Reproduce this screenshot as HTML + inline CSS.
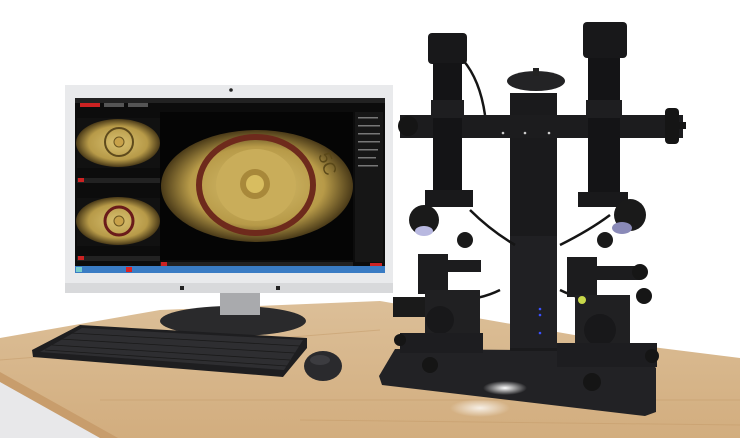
<!DOCTYPE html>
<html><head><style>html,body{margin:0;padding:0;background:#fff;width:740px;height:438px;overflow:hidden}</style></head>
<body>
<svg width="740" height="438" viewBox="0 0 740 438" xmlns="http://www.w3.org/2000/svg">
<defs>
<linearGradient id="wood" x1="0" y1="0" x2="0" y2="1"><stop offset="0" stop-color="#dcbf98"/><stop offset="1" stop-color="#d2ad7e"/></linearGradient>
<radialGradient id="brass" cx="0.5" cy="0.5" r="0.5"><stop offset="0" stop-color="#d8c070"/><stop offset="0.7" stop-color="#b79a48"/><stop offset="1" stop-color="#4a3a18"/></radialGradient>
<radialGradient id="glow" cx="0.5" cy="0.5" r="0.5"><stop offset="0" stop-color="#fff"/><stop offset="1" stop-color="#fff" stop-opacity="0"/></radialGradient>
</defs>
<rect width="740" height="438" fill="#fff"/>
<polygon points="0,338 160,310 380,301 620,343 740,358 740,438 100,438 0,380" fill="url(#wood)"/>
<polygon points="0,380 100,438 0,438" fill="#e8e8ea"/>
<polygon points="0,372 0,382 100,438 118,438" fill="#c89d6c"/>
<g stroke="#c49a68" stroke-width="1" opacity="0.5"><line x1="0" y1="360" x2="380" y2="330"/><line x1="100" y1="400" x2="740" y2="400"/><line x1="300" y1="420" x2="740" y2="425"/></g>
<ellipse cx="233" cy="321" rx="73" ry="15" fill="#2a2a2c"/>
<rect x="220" y="290" width="40" height="25" fill="#a9aaad"/>
<rect x="65" y="85" width="328" height="208" fill="#e9eaec"/>
<rect x="65" y="283" width="328" height="10" fill="#d8d9db"/>
<circle cx="231" cy="90" r="1.8" fill="#222"/>
<rect x="180" y="286" width="4" height="4" fill="#222"/><rect x="276" y="286" width="4" height="4" fill="#222"/>
<rect x="75" y="98" width="310" height="175" fill="#0c0c0c"/>
<rect x="75" y="98" width="310" height="5" fill="#222"/>
<rect x="80" y="103" width="20" height="4" fill="#c22"/><rect x="104" y="103" width="20" height="4" fill="#555"/><rect x="128" y="103" width="20" height="4" fill="#555"/>
<rect x="77" y="118" width="83" height="50" fill="#111"/>
<ellipse cx="118" cy="143" rx="42" ry="24" fill="url(#brass)"/>
<circle cx="119" cy="142" r="14" fill="none" stroke="#5e4a1c" stroke-width="2"/>
<circle cx="119" cy="142" r="5" fill="#c8a24a" stroke="#6a5520"/>
<rect x="77" y="178" width="83" height="5" fill="#222"/>
<rect x="77" y="198" width="83" height="48" fill="#111"/>
<ellipse cx="118" cy="221" rx="42" ry="24" fill="url(#brass)"/>
<circle cx="119" cy="221" r="14" fill="none" stroke="#6a1a1a" stroke-width="3"/>
<circle cx="119" cy="221" r="5" fill="#c8a24a" stroke="#6a5520"/>
<rect x="77" y="256" width="83" height="5" fill="#222"/>
<rect x="78" y="178" width="6" height="4" fill="#c22"/><rect x="78" y="256" width="6" height="4" fill="#c22"/>
<rect x="160" y="112" width="193" height="148" fill="#050505"/>
<ellipse cx="257" cy="186" rx="96" ry="56" fill="url(#brass)"/>
<ellipse cx="256" cy="185" rx="57" ry="48" fill="none" stroke="#6e2a1c" stroke-width="6"/>
<ellipse cx="256" cy="185" rx="40" ry="36" fill="#c9ad5a"/>
<circle cx="255" cy="184" r="15" fill="#a8883a"/><circle cx="255" cy="184" r="9" fill="#d8bd60"/>
<text x="318" y="155" font-family="Liberation Sans" font-size="18" fill="#5a4818" transform="rotate(70 318 155)">5C</text>
<rect x="160" y="262" width="193" height="4" fill="#222"/><rect x="161" y="262" width="6" height="4" fill="#c22"/>
<rect x="355" y="112" width="28" height="150" fill="#161616"/>
<g fill="#777"><rect x="358" y="117" width="20" height="1.5"/><rect x="358" y="125" width="22" height="1.5"/><rect x="358" y="133" width="22" height="1.5"/><rect x="358" y="141" width="22" height="1.5"/><rect x="358" y="149" width="20" height="1.5"/><rect x="358" y="157" width="18" height="1.5"/><rect x="358" y="165" width="20" height="1.5"/></g>
<rect x="370" y="263" width="12" height="3" fill="#c22"/>
<rect x="75" y="266" width="310" height="7" fill="#3a7cc4"/>
<rect x="76" y="267" width="6" height="5" fill="#7cc"/><rect x="126" y="267" width="6" height="5" fill="#d22"/>
<polygon points="80,325 307,338 307,348 283,377 33,357 32,350" fill="#1e1e20"/>
<polygon points="82,328 303,340 284,370 40,352" fill="#2e2e31"/>
<g stroke="#1a1a1a" stroke-width="0.8"><line x1="70" y1="333" x2="300" y2="346"/><line x1="60" y1="339" x2="295" y2="353"/><line x1="52" y1="345" x2="290" y2="360"/><line x1="45" y1="350" x2="287" y2="366"/></g>
<ellipse cx="323" cy="366" rx="19" ry="15" fill="#2a2a2d"/>
<ellipse cx="320" cy="360" rx="10" ry="5" fill="#3c3c40"/>
<polygon points="395,349 640,351 656,368 656,412 645,416 382,385 379,376" fill="#222225"/>
<ellipse cx="505" cy="388" rx="22" ry="7" fill="url(#glow)"/>
<ellipse cx="480" cy="408" rx="30" ry="9" fill="url(#glow)" opacity="0.8"/>
<rect x="393" y="297" width="40" height="20" fill="#1a1a1a"/>
<rect x="510" y="93" width="47" height="258" fill="#1a1a1c"/>
<rect x="510" y="236" width="47" height="112" fill="#202023"/>
<ellipse cx="536" cy="81" rx="29" ry="10" fill="#232325"/>
<rect x="533" y="68" width="6" height="8" fill="#222"/>
<g fill="#3a50ff"><circle cx="540" cy="309" r="1.3"/><circle cx="540" cy="315" r="1.3"/><circle cx="540" cy="333" r="1.3"/></g>
<rect x="400" y="115" width="283" height="23" fill="#1c1c1e"/>
<circle cx="408" cy="126" r="10" fill="#151515"/>
<rect x="665" y="108" width="14" height="36" rx="4" fill="#151515"/><rect x="676" y="122" width="10" height="7" fill="#151515"/>
<g fill="#ccc"><circle cx="525" cy="133" r="1.3"/><circle cx="549" cy="133" r="1.3"/><circle cx="503" cy="133" r="1.3"/></g>
<rect x="428" y="33" width="39" height="31" rx="4" fill="#18181a"/>
<rect x="433" y="63" width="29" height="130" fill="#141416"/>
<rect x="431" y="100" width="33" height="18" fill="#1e1e20"/>
<rect x="425" y="190" width="48" height="17" fill="#19191b"/>
<rect x="583" y="22" width="44" height="36" rx="4" fill="#18181a"/>
<rect x="588" y="58" width="32" height="135" fill="#141416"/>
<rect x="586" y="100" width="36" height="18" fill="#1e1e20"/>
<rect x="578" y="192" width="50" height="15" fill="#19191b"/>
<g stroke="#151515" stroke-width="2.5" fill="none"><path d="M463 60 Q480 80 485 115"/><path d="M470 210 Q490 230 515 245"/><path d="M560 245 Q590 230 610 215"/><path d="M500 290 Q480 300 455 300"/><path d="M560 290 Q580 300 600 300"/></g>
<circle cx="424" cy="220" r="15" fill="#1a1a1a"/><ellipse cx="424" cy="231" rx="9" ry="5" fill="#b8b8e0"/>
<circle cx="630" cy="215" r="16" fill="#1a1a1a"/><ellipse cx="622" cy="228" rx="10" ry="6" fill="#8a8ab8"/>
<circle cx="465" cy="240" r="8" fill="#1a1a1a"/><circle cx="605" cy="240" r="8" fill="#1a1a1a"/>
<rect x="418" y="254" width="30" height="40" fill="#1c1c1e"/>
<rect x="446" y="260" width="35" height="12" fill="#1c1c1e"/>
<rect x="425" y="290" width="55" height="45" fill="#202022"/>
<circle cx="440" cy="320" r="14" fill="#18181a"/>
<rect x="400" y="333" width="83" height="20" fill="#1d1d20"/>
<circle cx="400" cy="340" r="6" fill="#151515"/>
<circle cx="430" cy="365" r="8" fill="#151515"/>
<rect x="567" y="257" width="30" height="40" fill="#1c1c1e"/>
<rect x="595" y="266" width="45" height="14" fill="#1c1c1e"/>
<circle cx="640" cy="272" r="8" fill="#161616"/><circle cx="644" cy="296" r="8" fill="#161616"/>
<rect x="575" y="295" width="55" height="55" fill="#202022"/>
<circle cx="582" cy="300" r="4" fill="#c8d84a"/>
<circle cx="600" cy="330" r="16" fill="#18181a"/>
<rect x="557" y="343" width="100" height="24" fill="#1d1d20"/>
<circle cx="652" cy="356" r="7" fill="#151515"/>
<circle cx="592" cy="382" r="9" fill="#151515"/>
</svg>
</body></html>
